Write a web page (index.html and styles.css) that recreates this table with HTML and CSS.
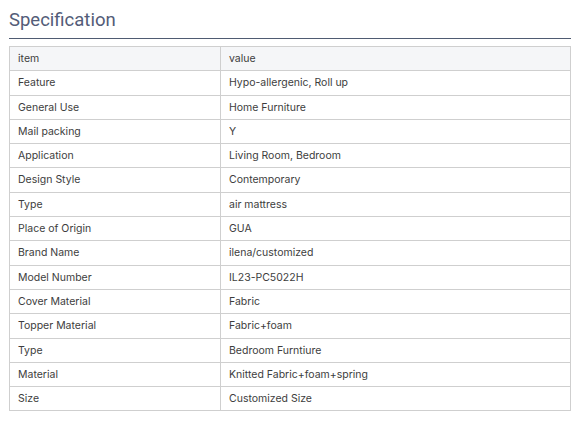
FILE: index.html
```html
<!DOCTYPE html>
<html>
<head>
<meta charset="utf-8">
<link rel="stylesheet" href="styles.css">
</head>
<body>
<div class="spec">
  <h2 class="spec-title">Specification</h2>
  <table class="spec-table">
    <tr class="head"><td class="c1">item</td><td>value</td></tr>
    <tr><td class="c1">Feature</td><td>Hypo-allergenic, Roll up</td></tr>
    <tr><td class="c1">General Use</td><td>Home Furniture</td></tr>
    <tr><td class="c1">Mail packing</td><td>Y</td></tr>
    <tr><td class="c1">Application</td><td>Living Room, Bedroom</td></tr>
    <tr><td class="c1">Design Style</td><td>Contemporary</td></tr>
    <tr><td class="c1">Type</td><td>air mattress</td></tr>
    <tr><td class="c1">Place of Origin</td><td>GUA</td></tr>
    <tr><td class="c1">Brand Name</td><td>ilena/customized</td></tr>
    <tr><td class="c1">Model Number</td><td>IL23-PC5022H</td></tr>
    <tr><td class="c1">Cover Material</td><td>Fabric</td></tr>
    <tr><td class="c1">Topper Material</td><td>Fabric+foam</td></tr>
    <tr><td class="c1">Type</td><td>Bedroom Furntiure</td></tr>
    <tr><td class="c1">Material</td><td>Knitted Fabric+foam+spring</td></tr>
    <tr><td class="c1">Size</td><td>Customized Size</td></tr>
  </table>
</div>
</body>
</html>
```
FILE: styles.css
```css
html, body { margin: 0; padding: 0; background: #fff; }
.spec { padding: 0 9px; font-family: Inter, "Noto Sans", sans-serif; }
.spec-title {
  margin: 0;
  padding: 9px 0 7px;
  font-family: Roboto, "Noto Sans", sans-serif;
  font-weight: 400;
  font-size: 18.5px;
  line-height: 22px;
  color: #535c78;
  border-bottom: 1px solid #4f5b72;
}
.spec-table {
  margin-top: 7px;
  width: 100%;
  border-collapse: collapse;
  font-size: 10.5px;
  color: #3d3d3d;
}
.spec-table td {
  border: 1px solid #cfcfcf;
  padding: 5px 8px;
  line-height: 13.3px;
  text-align: left;
}
.spec-table .c1 { width: 194px; }
.spec-table .head td { background: #f5f6f8; }
```
